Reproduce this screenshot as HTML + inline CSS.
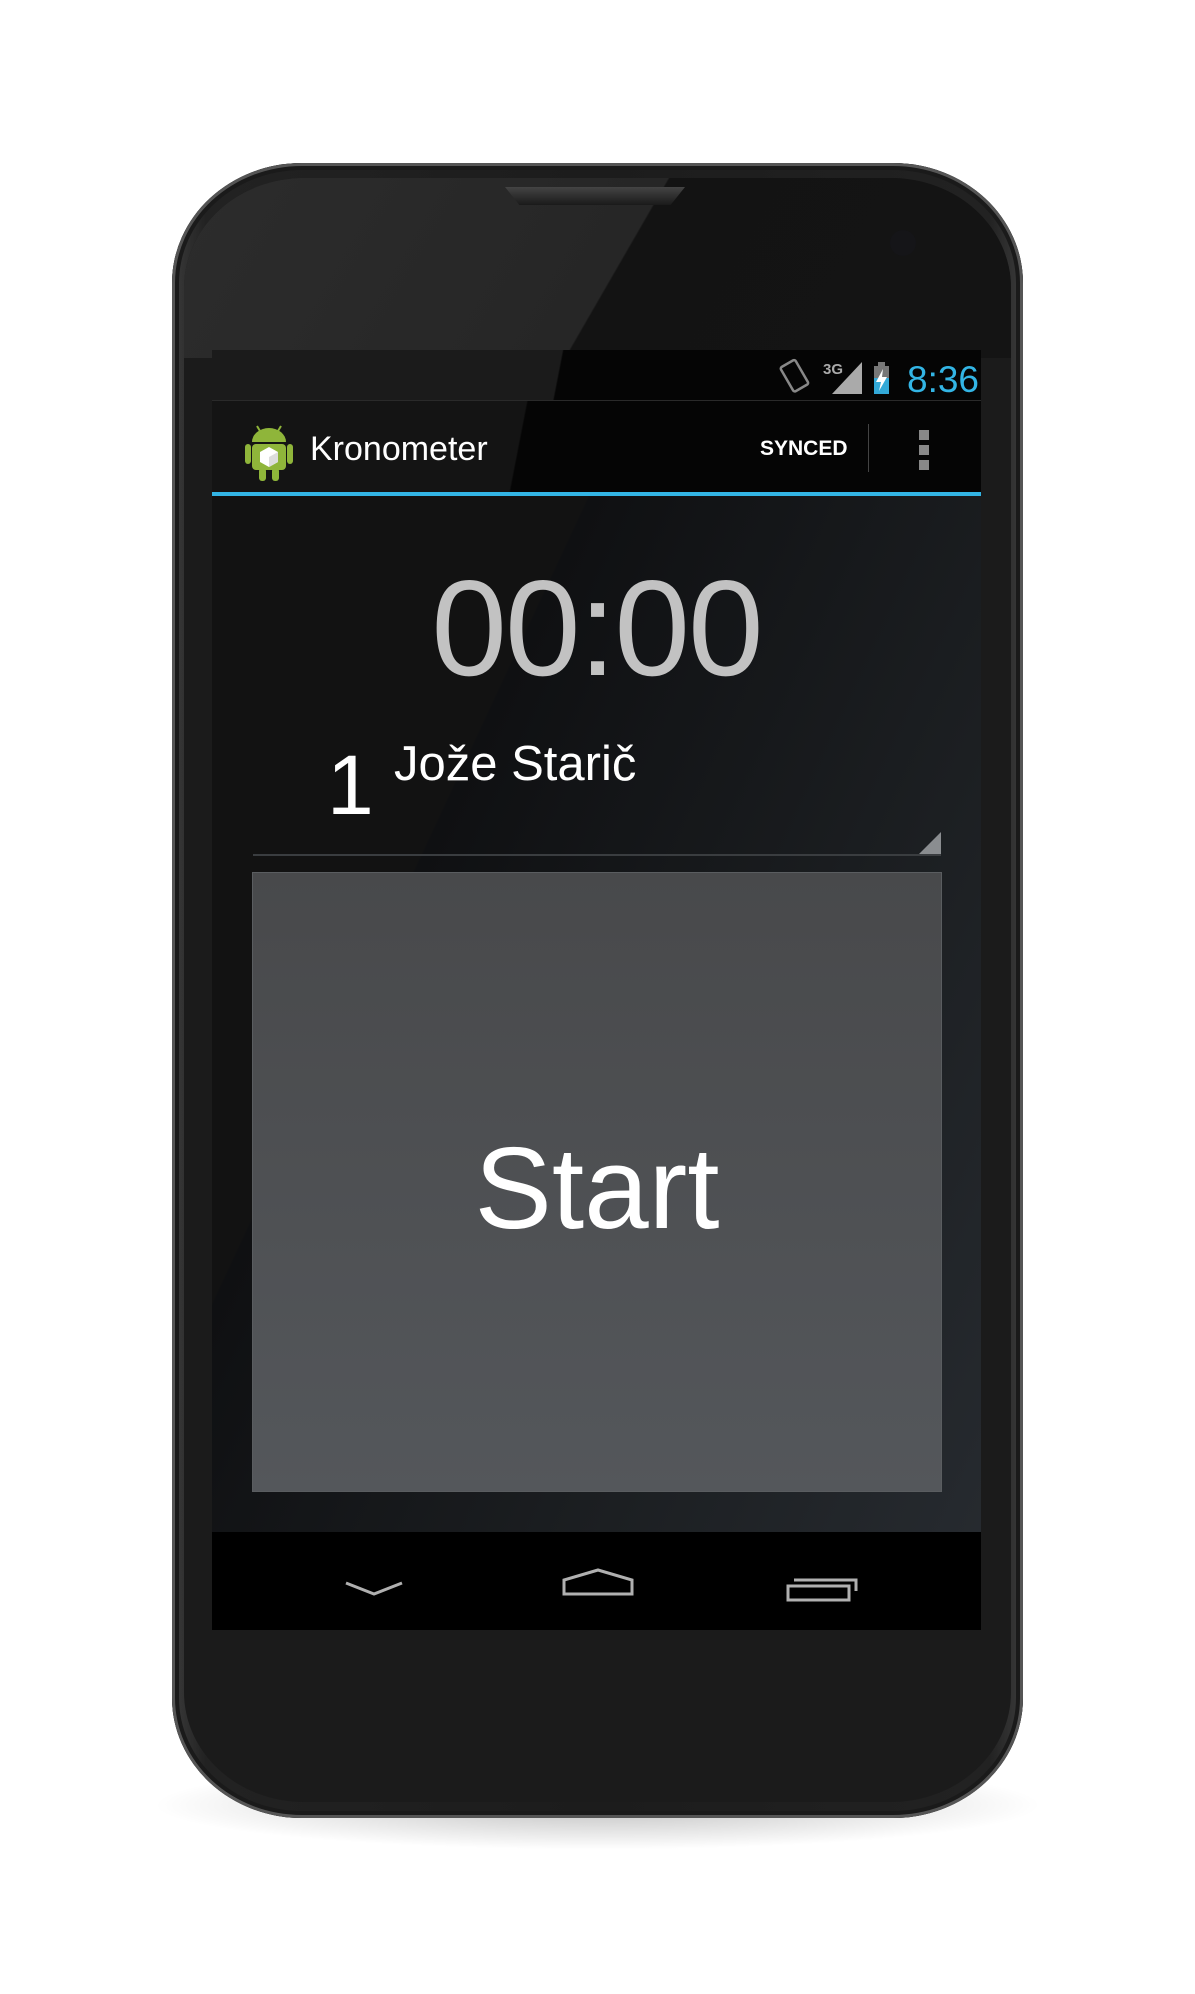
<!DOCTYPE html>
<html><head><meta charset="utf-8"><style>
html,body{margin:0;padding:0;background:#fff;width:1195px;height:1994px;overflow:hidden;font-family:"Liberation Sans","DejaVu Sans",sans-serif}
.abs{position:absolute}
.shadow{left:150px;top:1760px;width:895px;height:90px;border-radius:50%;background:radial-gradient(ellipse at center,rgba(0,0,0,.25),rgba(0,0,0,0) 70%)}
.phone{left:172px;top:163px;width:851px;height:1655px;border-radius:130px/120px;background:linear-gradient(90deg,#3a3a3a,#222 4%,#1c1c1c 50%,#222 96%,#3a3a3a);box-shadow:inset 0 0 0 3px #555,inset 0 0 0 7px #1a1a1a}
.face{left:184px;top:178px;width:827px;height:1624px;border-radius:120px/110px;background:#1b1b1b;overflow:hidden}
.screen{left:212px;top:350px;width:769px;height:1280px;background:#000;overflow:hidden}
</style></head><body>
<div class="abs shadow"></div>
<div class="abs phone"></div>
<div class="abs face"><div class="abs" style="left:0;top:0;width:827px;height:180px;background:linear-gradient(120deg,#2c2c2c 0%,#262626 52%,#131313 52.2%,#141414 100%)"></div></div>
<div class="abs" style="left:505px;top:187px;width:180px;height:18px;background:linear-gradient(#444,#1a1a1a);clip-path:polygon(0 0,100% 0,92% 100%,8% 100%)"></div>
<div class="abs" style="left:890px;top:230px;width:26px;height:26px;border-radius:50%;background:#151518"></div>
<div class="abs screen">
  <div class="abs" style="left:0;top:0;width:769px;height:50px;background:linear-gradient(101deg,#1b1b1b 0 45%,#050505 45.2%)"></div>
  <svg class="abs" style="left:560px;top:4px" width="209" height="44">
    <g fill="none" stroke="#888" stroke-width="2.5"><rect x="14" y="8" width="17" height="28" rx="2" transform="rotate(-30 22 22)"/></g>
    <text x="51" y="20" fill="#aaa" font-size="15" font-weight="bold" font-family="Liberation Sans">3G</text>
    <polygon points="60,40 90,40 90,8" fill="#aaa"/>
    <rect x="102" y="12" width="15" height="28" fill="#33a9d8"/><rect x="102" y="12" width="15" height="12" fill="#777"/><rect x="106" y="8" width="7" height="4" fill="#777"/>
    <polygon points="111,15 104,28 109,28 107,37 115,23 110,23" fill="#fff"/>
    <text x="135" y="38" fill="#33b5e5" font-size="37" font-family="Liberation Sans">8:36</text>
  </svg>
  <div class="abs" style="left:0;top:50px;width:769px;height:93px;background:linear-gradient(101deg,#141414 0 40%,#050505 40.2%)"></div>
  <div class="abs" style="left:0;top:50px;width:769px;height:1px;background:#2a2a2a"></div>
  <svg class="abs" style="left:32px;top:70px" width="50" height="62">
    <g fill="#8fb53a"><path d="M8 22a17 14 0 0 1 34 0z"/><rect x="8" y="24" width="34" height="26" rx="4"/><rect x="1" y="24" width="6" height="20" rx="3"/><rect x="43" y="24" width="6" height="20" rx="3"/><rect x="15" y="48" width="7" height="13" rx="3"/><rect x="28" y="48" width="7" height="13" rx="3"/></g>
    <g stroke="#8fb53a" stroke-width="2"><line x1="13" y1="6" x2="16" y2="11"/><line x1="37" y1="6" x2="34" y2="11"/></g>
    <polygon points="25,27 34,32 34,42 25,47 16,42 16,32" fill="#fff"/><polygon points="25,37 34,32 34,42 25,47" fill="#ddd"/>
  </svg>
  <div class="abs" style="left:98px;top:80px;color:#fff;font-size:34px">Kronometer</div>
  <div class="abs" style="left:548px;top:87px;color:#fff;font-size:21px;font-weight:bold">SYNCED</div>
  <div class="abs" style="left:656px;top:74px;width:1px;height:48px;background:#444"></div>
  <div class="abs" style="left:707px;top:80px;width:10px;height:10px;background:#888"></div>
  <div class="abs" style="left:707px;top:95px;width:10px;height:10px;background:#888"></div>
  <div class="abs" style="left:707px;top:110px;width:10px;height:10px;background:#888"></div>
  <div class="abs" style="left:0;top:142px;width:769px;height:4px;background:#33b5e5"></div>
  <div class="abs" style="left:0;top:146px;width:769px;height:1036px;background:linear-gradient(115deg,#121212 0 30%,#0f1012 30.2%,#1c1f22 70%,#262a2f)"></div>
  <div class="abs" style="left:0;top:208px;width:769px;text-align:center;color:#c2c2c2;font-size:136px;line-height:140px;letter-spacing:-2px">00:00</div>
  <div class="abs" style="left:115px;top:390px;color:#fff;font-size:84px;line-height:90px">1</div>
  <div class="abs" style="left:182px;top:386px;color:#fff;font-size:49px;line-height:56px">Jože Starič</div>
  <div class="abs" style="left:41px;top:504px;width:688px;height:2px;background:#3a3d40"></div>
  <div class="abs" style="left:707px;top:482px;width:22px;height:22px;background:#8a8d90;clip-path:polygon(100% 0,100% 100%,0 100%)"></div>
  <div class="abs" style="left:41px;top:523px;width:688px;height:618px;background:linear-gradient(#48494b,#54575b);box-shadow:0 0 0 1px #5a5d60"></div>
  <div class="abs" style="left:41px;top:778px;width:688px;text-align:center;color:#fff;font-size:116px;line-height:120px">Start</div>
  <div class="abs" style="left:0;top:1182px;width:769px;height:98px;background:#000"></div>
  <svg class="abs" style="left:0;top:1182px" width="769" height="98">
    <g fill="none" stroke="#b0b0b0" stroke-width="3">
      <polyline points="134,51 162,62 190,51"/>
      <path d="M352 62 V48 L386 38 L420 48 V62 Z"/>
      <path d="M582 48 H644 V59 M576 54 H637 V68 H576 Z"/>
    </g>
  </svg>
</div>
</body></html>
